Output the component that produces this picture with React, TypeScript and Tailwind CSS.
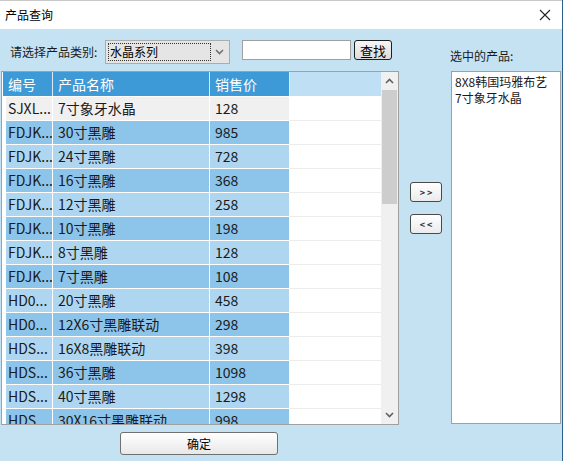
import React from 'react';

const rows = [
  { code: 'SJXL...', name: '7寸象牙水晶', price: '128' },
  { code: 'FDJK...', name: '30寸黑雕', price: '985' },
  { code: 'FDJK...', name: '24寸黑雕', price: '728' },
  { code: 'FDJK...', name: '16寸黑雕', price: '368' },
  { code: 'FDJK...', name: '12寸黑雕', price: '258' },
  { code: 'FDJK...', name: '10寸黑雕', price: '198' },
  { code: 'FDJK...', name: '8寸黑雕', price: '128' },
  { code: 'FDJK...', name: '7寸黑雕', price: '108' },
  { code: 'HD0...', name: '20寸黑雕', price: '458' },
  { code: 'HD0...', name: '12X6寸黑雕联动', price: '298' },
  { code: 'HDS...', name: '16X8黑雕联动', price: '398' },
  { code: 'HDS...', name: '36寸黑雕', price: '1098' },
  { code: 'HDS...', name: '40寸黑雕', price: '1298' },
  { code: 'HDS...', name: '30X16寸黑雕联动', price: '998' },
];

const selected = ['8X8韩国玛雅布艺', '7寸象牙水晶'];

const Chevron = ({ up = false, className = '' }: { up?: boolean; className?: string }) => (
  <svg width="9" height="6" viewBox="0 0 9 6" className={className}>
    <path
      d={up ? 'M1 5 L4.5 1.5 L8 5' : 'M1 1 L4.5 4.5 L8 1'}
      fill="none"
      stroke="currentColor"
      strokeWidth="1.6"
    />
  </svg>
);

function rowBg(i: number) {
  if (i === 0) return 'bg-[#f0f0f0]';
  return i % 2 === 1 ? 'bg-[#8cc4ea]' : 'bg-[#aed6f1]';
}

const ProductGrid = () => (
  <div className="ml-[1px] w-[398px] h-[354px] border border-[#a0a0a0] bg-white flex overflow-hidden">
    {/* Table */}
    <div className="flex-1 flex flex-col text-[14px] text-[#1a1a1a]">
      {/* Header */}
      <div className="flex h-[24px] shrink-0 text-white">
        <div className="w-[1px] bg-white" />
        <div className="w-[50px] bg-[#3d9ad6] border-r border-[#d8ecf8] pl-[5px] flex items-center">编号</div>
        <div className="w-[157px] bg-[#3d9ad6] border-r border-[#d8ecf8] pl-[5px] flex items-center">产品名称</div>
        <div className="w-[80px] bg-[#3d9ad6] border-r border-[#d8ecf8] pl-[5px] flex items-center">销售价</div>
        <div className="flex-1 bg-[#bfdff4]" />
      </div>
      <div className="h-[1px] shrink-0 bg-white" />
      {rows.map((r, i) => (
        <div key={i} className="flex h-[24px] shrink-0">
          <div className="w-[4px] bg-white" />
          <div className={`w-[47px] ${rowBg(i)} border-r border-b border-white pl-[2px] flex items-center whitespace-nowrap overflow-hidden`}>
            {r.code}
          </div>
          <div className={`w-[157px] ${rowBg(i)} border-r border-b border-white pl-[5px] flex items-center whitespace-nowrap`}>
            {r.name}
          </div>
          <div className={`w-[80px] ${rowBg(i)} border-r border-b border-white pl-[5px] flex items-center`}>
            {r.price}
          </div>
          <div className="flex-1 bg-white border-b border-[#ececec]" />
        </div>
      ))}
    </div>
    {/* Scrollbar */}
    <div className="w-[17px] bg-[#f0f0f0] flex flex-col items-center">
      <div className="h-[18px] flex items-center justify-center text-[#606060]">
        <Chevron up />
      </div>
      <div className="w-[15px] h-[114px] bg-[#cdcdcd]" />
      <div className="flex-1" />
      <div className="h-[18px] flex items-center justify-center text-[#606060]">
        <Chevron />
      </div>
    </div>
  </div>
);

const SmallButton = ({ children }: { children: React.ReactNode }) => (
  <button className="w-[32px] h-[20px] rounded-[3px] border border-[#4a4a4a] bg-gradient-to-b from-white to-[#ebebeb] text-[9px] font-bold text-[#333] leading-none flex items-center justify-center">
    {children}
  </button>
);

export default function App() {
  return (
    <div
      className="w-[563px] h-[461px] flex flex-col bg-[#c5e2f2] border-r border-[#2c5f8a] overflow-hidden"
      style={{ fontFamily: '"Noto Sans CJK SC", "Noto Sans", sans-serif' }}
    >
      {/* Title bar */}
      <div className="h-[29px] shrink-0 bg-white border-t border-[#c8c8c8] flex items-center justify-between pl-[5px] pr-[11px]">
        <span className="text-[12px] text-black">产品查询</span>
        <svg width="12" height="12" viewBox="0 0 12 12">
          <path d="M1 1 L11 11 M11 1 L1 11" stroke="#222" strokeWidth="1.1" />
        </svg>
      </div>

      {/* Body */}
      <div className="flex-1 flex flex-col">
        <div className="flex">
          {/* Left column */}
          <div className="w-[399px] flex flex-col">
            <div className="h-[42px] flex items-start pt-[11px] text-[12px]">
              <span className="ml-[10px] w-[95px] h-[24px] flex items-center text-[#1a1a1a]">请选择产品类别:</span>
              <div className="w-[125px] h-[24px] bg-[#e5e5e5] border border-[#acacac] flex items-center p-[2px]">
                <div className="w-[103px] h-full border border-dotted border-[#333] flex items-center pl-[1px] text-[12px] text-black">
                  水晶系列
                </div>
                <div className="flex-1 flex items-center justify-center text-[#707070]">
                  <Chevron />
                </div>
              </div>
              <div className="ml-[12px] w-[109px] h-[20px] bg-white border border-[#a0a0a0]" />
              <button className="ml-[3px] w-[38px] h-[20px] rounded-[3px] border border-[#1e1e1e] bg-gradient-to-b from-[#f6f6f6] to-[#dcdcdc] text-[13px] leading-none text-black flex items-center justify-center">
                查找
              </button>
            </div>
            <ProductGrid />
          </div>

          {/* Middle column */}
          <div className="w-[52px] flex flex-col pt-[153px] pl-[11px] gap-[12px]">
            <SmallButton>&gt; &gt;</SmallButton>
            <SmallButton>&lt; &lt;</SmallButton>
          </div>

          {/* Right column */}
          <div className="w-[110px] flex flex-col">
            <div className="h-[42px] flex items-end pb-[6px] -ml-[1px] text-[12px] text-[#1a1a1a]">选中的产品:</div>
            <div className="h-[353px] bg-white border border-[#a0a0a0] pl-[3px] pt-[2px] text-[12px] leading-[16px] text-[#1a1a1a]">
              {selected.map((s) => (
                <div key={s} className="whitespace-nowrap">{s}</div>
              ))}
            </div>
          </div>
        </div>

        {/* Bottom */}
        <div className="pt-[7px] pl-[120px]">
          <button className="w-[158px] h-[23px] rounded-[3px] border border-[#707070] bg-gradient-to-b from-white to-[#e8e8e8] text-[12px] text-black flex items-center justify-center">
            确定
          </button>
        </div>
      </div>
    </div>
  );
}
